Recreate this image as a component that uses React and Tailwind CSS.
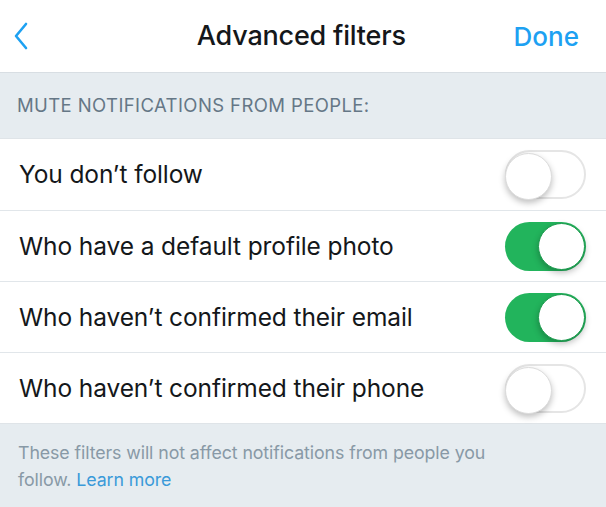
import React, { useState } from "react";

const rows = [
  { id: 1, label: "You don’t follow", on: false },
  { id: 2, label: "Who have a default profile photo", on: true },
  { id: 3, label: "Who haven’t confirmed their email", on: true },
  { id: 4, label: "Who haven’t confirmed their phone", on: false },
];

function Toggle({ on, onClick }) {
  return (
    <button
      onClick={onClick}
      className={`relative w-[81px] h-[49px] rounded-full transition-colors ${
        on ? "bg-[#22b45c]" : "bg-white border-2 border-[#e5e5e5]"
      }`}
    >
      <span
        className={`absolute top-[1px] w-[47px] h-[47px] rounded-full bg-white shadow-[0_3px_6px_rgba(0,0,0,0.25)] ${
          on ? "right-[1px] border border-[#1a9a4c]" : "left-[-2px] top-[-1px] border border-[#dcdcdc]"
        }`}
      />
    </button>
  );
}

export default function App() {
  const [state, setState] = useState(rows.map((r) => r.on));

  return (
    <div className="w-[606px] h-[507px] bg-[#e6ecf0] font-['Inter',sans-serif] overflow-hidden">
      <div className="h-[73px] bg-white flex items-center justify-between px-[12px] border-b border-[#d8dee3]">
        <svg width="16" height="28" viewBox="0 0 16 28" className="ml-[1px]">
          <path
            d="M13 2 L3 14 L13 26"
            fill="none"
            stroke="#1da1f2"
            strokeWidth="2.6"
            strokeLinecap="round"
            strokeLinejoin="round"
          />
        </svg>
        <h1 className="text-[27px] font-medium text-[#14171a] tracking-[-0.2px] ml-[60px]">
          Advanced filters
        </h1>
        <button className="text-[26px] font-medium text-[#1da1f2] mr-[15px]">
          Done
        </button>
      </div>

      <div className="h-[65px] flex items-center px-[17px] text-[18.5px] tracking-[0.4px] text-[#657786]">
        MUTE NOTIFICATIONS FROM PEOPLE:
      </div>

      <div className="bg-white border-t border-b border-[#dfe4e8]">
        {rows.map((r, i) => (
          <div
            key={r.id}
            className={`h-[71px] flex items-center justify-between pl-[19px] pr-[20px] ${
              i > 0 ? "border-t border-[#e1e6ea]" : ""
            }`}
          >
            <span className="text-[24.5px] text-[#14171a] tracking-[-0.1px]">
              {r.label}
            </span>
            <Toggle
              on={state[i]}
              onClick={() =>
                setState((s) => s.map((v, j) => (j === i ? !v : v)))
              }
            />
          </div>
        ))}
      </div>

      <p className="pl-[18px] pr-[96px] pt-[15px] text-[17.8px] tracking-[-0.1px] leading-[27px] text-[#8899a6]">
        These filters will not affect notifications from people you follow.{" "}
        <a className="text-[#3a9ad9]">Learn more</a>
      </p>
    </div>
  );
}
